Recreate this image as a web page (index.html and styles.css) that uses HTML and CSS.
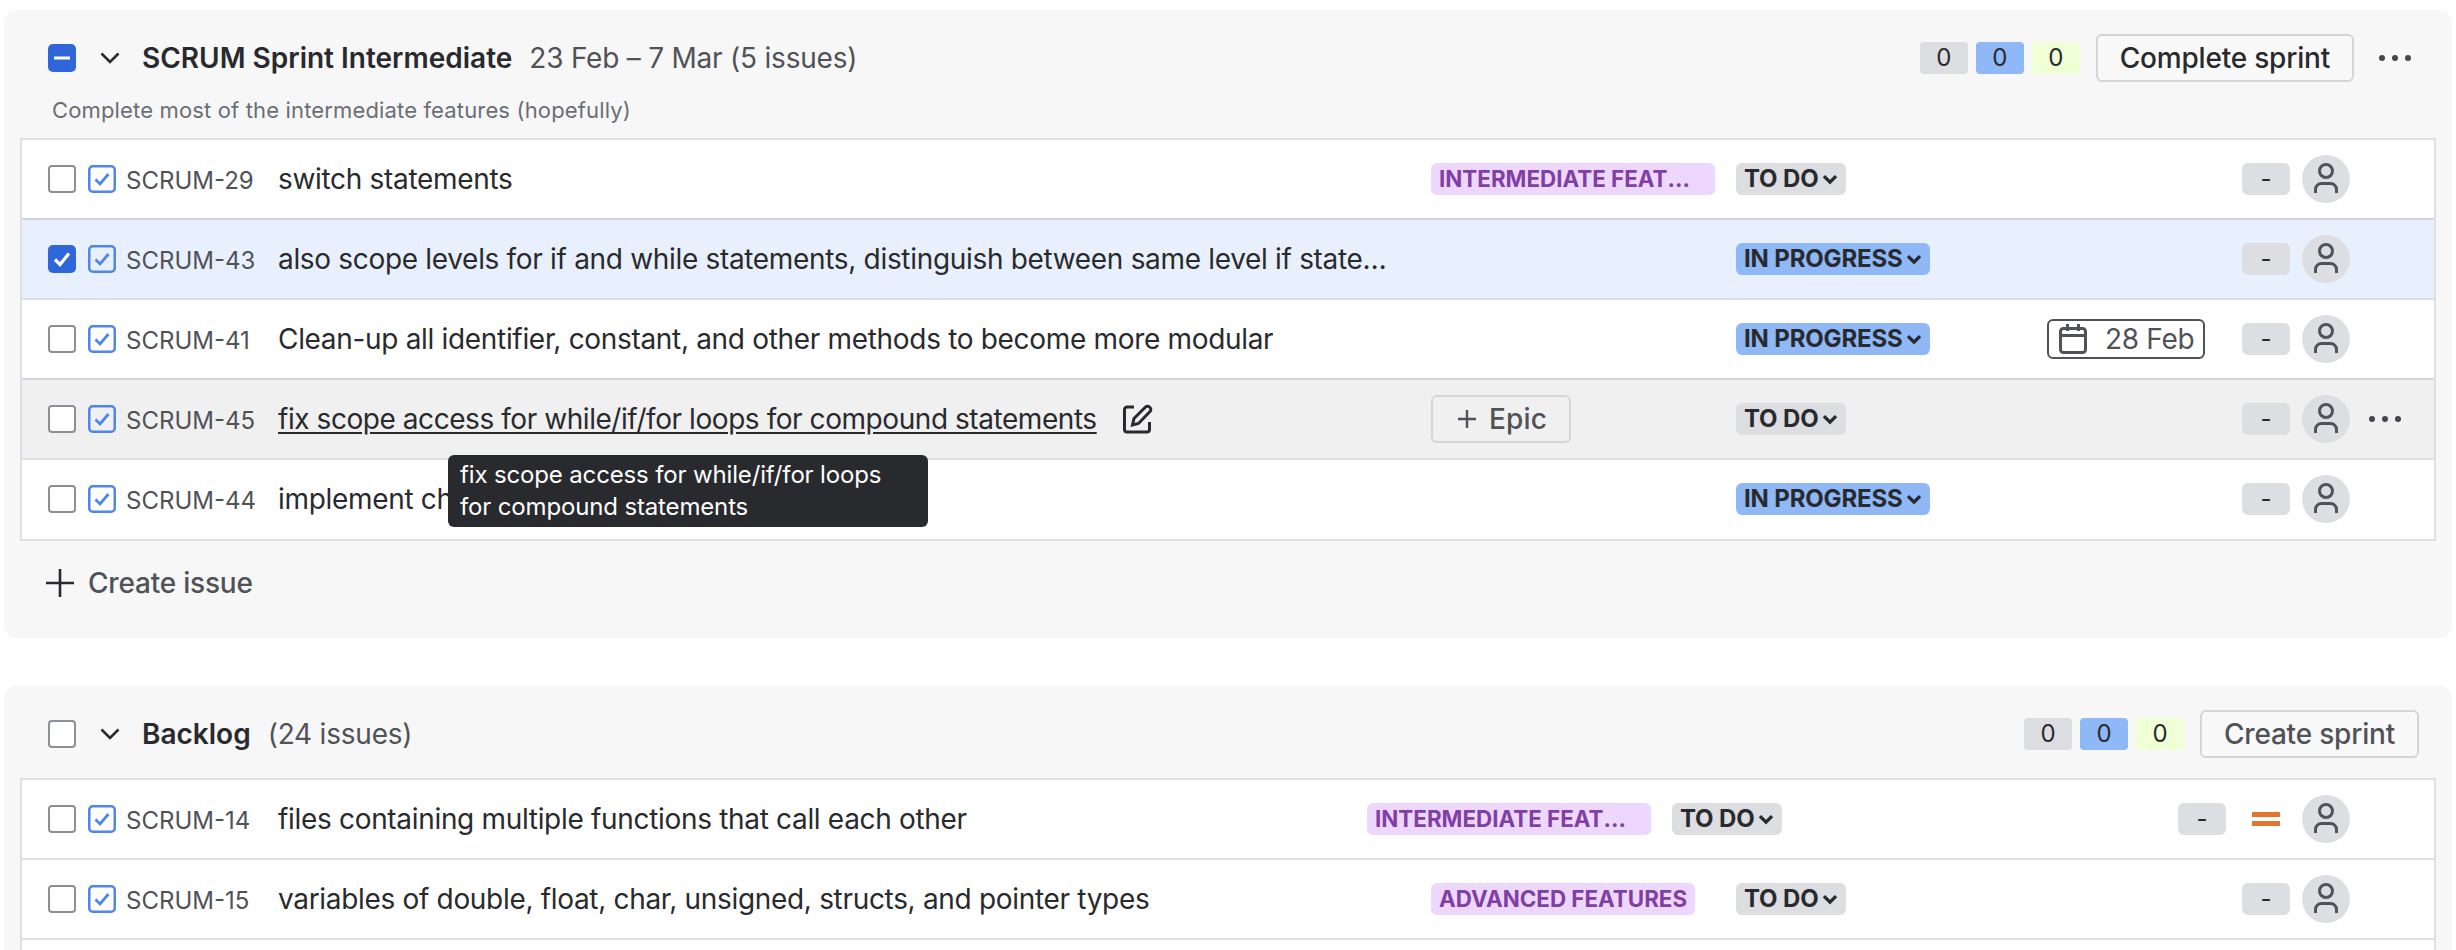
FILE: index.html
```html
<!DOCTYPE html>
<html lang="en">
<head>
  <meta charset="UTF-8">
  <meta name="viewport" content="width=device-width, initial-scale=1.0">
  <title>Backlog</title>
  <link rel="stylesheet" href="styles.css">
</head>
<body>
  <svg class="defs" width="0" height="0">
    <symbol id="type-task" viewBox="0 0 28 28">
      <rect x="1.25" y="1.25" width="25.5" height="25.5" rx="3.5" fill="none" stroke="#4f86e8" stroke-width="2.5"/>
      <path d="M7.500 14.500l4.500 4.500 8.500-10" fill="none" stroke="#4f86e8" stroke-width="2.800"/>
    </symbol>
    <symbol id="person" viewBox="0 0 48 48">
      <circle cx="24" cy="16" r="6.5" fill="none" stroke="#505258" stroke-width="3"/>
      <path d="M13.500 38v-3.500a6 6 0 0 1 6-6h9a6 6 0 0 1 6 6V38" fill="none" stroke="#505258" stroke-width="3"/>
    </symbol>
    <symbol id="dots" viewBox="0 0 34 8">
      <circle cx="4" cy="4" r="3" fill="#44464c"/>
      <circle cx="17" cy="4" r="3" fill="#44464c"/>
      <circle cx="30" cy="4" r="3" fill="#44464c"/>
    </symbol>
    <symbol id="chev" viewBox="0 0 20 12">
      <path d="M1.500 1.500L10 10l8.500-8.500" fill="none" stroke="#292a2e" stroke-width="2.600"/>
    </symbol>
    <symbol id="chev-small" viewBox="0 0 14 10">
      <path d="M1.500 2L7 7.500 12.500 2" fill="none" stroke="#292a2e" stroke-width="3"/>
    </symbol>
  </svg>

  <section class="panel">
    <div class="panel-head">
      <span class="check check-some"><svg width="28" height="28" viewBox="0 0 28 28"><path d="M6 14h16" stroke="#fff" stroke-width="3"/></svg></span>
      <svg class="chev" width="20" height="12"><use href="#chev"/></svg>
      <h2>SCRUM Sprint Intermediate</h2>
      <span class="meta">23 Feb – 7 Mar (5 issues)</span>
      <div class="head-end">
        <span class="count">0</span>
        <span class="count count-blue">0</span>
        <span class="count count-green">0</span>
        <button class="btn">Complete sprint</button>
        <svg class="head-dots" width="34" height="8"><use href="#dots"/></svg>
      </div>
    </div>
    <p class="goal">Complete most of the intermediate features (hopefully)</p>

    <div class="list list-sprint">
      <div class="row">
        <span class="check"></span>
        <svg class="type" width="28" height="28"><use href="#type-task"/></svg>
        <span class="key">SCRUM-29</span>
        <span class="summary">switch statements</span>
        <div class="row-end">
          <div class="col-epic"><span class="epic epic-cut">INTERMEDIATE FEATURES</span></div>
          <div class="col-status"><span class="status">TO DO<svg width="16" height="11"><use href="#chev-small"/></svg></span></div>
          <div class="col-date"></div>
          <span class="est">-</span>
          <span class="avatar"><svg width="48" height="48"><use href="#person"/></svg></span>
        </div>
      </div>

      <div class="row row-selected">
        <span class="check check-on"><svg width="28" height="28" viewBox="0 0 28 28"><path d="M7 14.500l5 5 9-11" fill="none" stroke="#fff" stroke-width="3.200"/></svg></span>
        <svg class="type" width="28" height="28"><use href="#type-task"/></svg>
        <span class="key">SCRUM-43</span>
        <span class="summary">also scope levels for if and while statements, distinguish between same level if statements</span>
        <div class="row-end">
          <div class="col-epic"></div>
          <div class="col-status"><span class="status status-blue">IN PROGRESS<svg width="16" height="11"><use href="#chev-small"/></svg></span></div>
          <div class="col-date"></div>
          <span class="est">-</span>
          <span class="avatar"><svg width="48" height="48"><use href="#person"/></svg></span>
        </div>
      </div>

      <div class="row">
        <span class="check"></span>
        <svg class="type" width="28" height="28"><use href="#type-task"/></svg>
        <span class="key">SCRUM-41</span>
        <span class="summary">Clean-up all identifier, constant, and other methods to become more modular</span>
        <div class="row-end">
          <div class="col-epic"></div>
          <div class="col-status"><span class="status status-blue">IN PROGRESS<svg width="16" height="11"><use href="#chev-small"/></svg></span></div>
          <div class="col-date">
            <span class="date">
              <svg width="28" height="30" viewBox="0 0 28 30"><rect x="1.500" y="4.500" width="25" height="24" rx="3" fill="none" stroke="#505258" stroke-width="3"/><path d="M1.500 11.500h25M8.500 0v7M19.500 0v7" fill="none" stroke="#505258" stroke-width="3"/></svg>
              28 Feb
            </span>
          </div>
          <span class="est">-</span>
          <span class="avatar"><svg width="48" height="48"><use href="#person"/></svg></span>
        </div>
      </div>

      <div class="row row-hover">
        <span class="check"></span>
        <svg class="type" width="28" height="28"><use href="#type-task"/></svg>
        <span class="key">SCRUM-45</span>
        <span class="summary summary-link">fix scope access for while/if/for loops for compound statements</span>
        <svg class="edit" width="30" height="30" viewBox="0 0 30 30">
          <path d="M11 3H4a2.500 2.500 0 0 0-2.500 2.500v20A2.500 2.500 0 0 0 4 28h20a2.500 2.500 0 0 0 2.500-2.500V18" fill="none" stroke="#292a2e" stroke-width="3"/>
          <path d="M9.500 21l1.500-6.500L22.500 3a2.800 2.800 0 0 1 4 0l.5.500a2.800 2.800 0 0 1 0 4L15.500 19.500z" fill="none" stroke="#292a2e" stroke-width="3"/>
        </svg>
        <div class="tooltip">fix scope access for while/if/for loops for compound statements</div>
        <div class="row-end">
          <div class="col-epic">
            <button class="btn btn-epic">
              <svg width="20" height="20" viewBox="0 0 20 20"><path d="M10 1v18M1 10h18" stroke="#505258" stroke-width="2.400"/></svg>
              Epic
            </button>
          </div>
          <div class="col-status"><span class="status">TO DO<svg width="16" height="11"><use href="#chev-small"/></svg></span></div>
          <div class="col-date"></div>
          <span class="est">-</span>
          <span class="avatar"><svg width="48" height="48"><use href="#person"/></svg></span>
          <svg class="row-dots" width="34" height="8"><use href="#dots"/></svg>
        </div>
      </div>

      <div class="row">
        <span class="check"></span>
        <svg class="type" width="28" height="28"><use href="#type-task"/></svg>
        <span class="key">SCRUM-44</span>
        <span class="summary">implement char data type</span>
        <div class="row-end">
          <div class="col-epic"></div>
          <div class="col-status"><span class="status status-blue">IN PROGRESS<svg width="16" height="11"><use href="#chev-small"/></svg></span></div>
          <div class="col-date"></div>
          <span class="est">-</span>
          <span class="avatar"><svg width="48" height="48"><use href="#person"/></svg></span>
        </div>
      </div>
    </div>

    <div class="create">
      <svg width="28" height="28" viewBox="0 0 28 28"><path d="M14 0v28M0 14h28" stroke="#292a2e" stroke-width="2.600"/></svg>
      Create issue
    </div>
  </section>

  <section class="panel panel-backlog">
    <div class="panel-head">
      <span class="check"></span>
      <svg class="chev" width="20" height="12"><use href="#chev"/></svg>
      <h2>Backlog</h2>
      <span class="meta">(24 issues)</span>
      <div class="head-end">
        <span class="count">0</span>
        <span class="count count-blue">0</span>
        <span class="count count-green">0</span>
        <button class="btn btn-muted">Create sprint</button>
      </div>
    </div>

    <div class="list">
      <div class="row">
        <span class="check"></span>
        <svg class="type" width="28" height="28"><use href="#type-task"/></svg>
        <span class="key">SCRUM-14</span>
        <span class="summary">files containing multiple functions that call each other</span>
        <div class="row-end">
          <div class="col-epic"><span class="epic epic-cut">INTERMEDIATE FEATURES</span></div>
          <div class="col-status"><span class="status">TO DO<svg width="16" height="11"><use href="#chev-small"/></svg></span></div>
          <div class="col-date"></div>
          <span class="est">-</span>
          <span class="priority"></span>
          <span class="avatar"><svg width="48" height="48"><use href="#person"/></svg></span>
        </div>
      </div>

      <div class="row">
        <span class="check"></span>
        <svg class="type" width="28" height="28"><use href="#type-task"/></svg>
        <span class="key">SCRUM-15</span>
        <span class="summary">variables of double, float, char, unsigned, structs, and pointer types</span>
        <div class="row-end">
          <div class="col-epic"><span class="epic">ADVANCED FEATURES</span></div>
          <div class="col-status"><span class="status">TO DO<svg width="16" height="11"><use href="#chev-small"/></svg></span></div>
          <div class="col-date"></div>
          <span class="est">-</span>
          <span class="avatar"><svg width="48" height="48"><use href="#person"/></svg></span>
        </div>
      </div>

      <div class="row"></div>
    </div>
  </section>
</body>
</html>
```

FILE: styles.css
```css
* { box-sizing: border-box; }
html, body { height: 100%; overflow: hidden; }
body { margin: 0; padding: 10px 4px 0; background: #fff; color: #292a2e; font-family: Inter, "Liberation Sans", sans-serif; }
.defs { position: absolute; }
svg { display: block; flex: none; }

.panel { background: #f7f7f7; border-radius: 12px; height: 628px; margin-bottom: 48px; }
.panel-backlog { height: 264px; margin-bottom: 0; border-radius: 12px 12px 0 0; overflow: hidden; }

.panel-head { display: flex; align-items: center; height: 72px; padding: 24px 33px 0 44px; }
.panel-head h2 { margin: 0 0 0 22px; font-size: 28px; font-weight: 600; line-height: 36px; }
.chev { margin-left: 24px; }
.meta { margin-left: 17px; font-size: 28px; color: #505258; line-height: 36px; letter-spacing: -0.22px; }
.head-end { display: flex; align-items: center; gap: 8px; margin-left: auto; }
.count { width: 48px; height: 32px; border-radius: 4px; background: #dddee1; font-size: 24px; line-height: 32px; text-align: center; }
.count-blue { background: #8fb8f6; }
.count-green { background: #efffd6; }
.btn { display: flex; align-items: center; height: 48px; padding: 0 22px; margin-left: 8px; background: #f9f9f9; border: 2px solid #d4d5d8; border-radius: 6px; color: #292a2e; font: 500 28px Inter, "Liberation Sans", sans-serif; letter-spacing: -0.2px; }
.btn-muted { color: #505258; }
.head-dots { margin: 0 7px 0 16px; }

.goal { margin: 0; padding: 12px 0 12px 48px; font-size: 22px; line-height: 32px; color: #6b6e76; letter-spacing: 0.15px; }
.panel-backlog .list { margin-top: 20px; }

.list { margin: 0 16px; border: 2px solid #dcdfe4; border-top: none; background: #fff; }
.list-sprint { padding-bottom: 1px; }
.row { display: flex; align-items: center; height: 80px; padding-left: 26px; border-top: 2px solid #dcdfe4; position: relative; }
.row-selected { background: #e9f0fd; border-top-color: #ccd3de; }
.row-hover { background: #f0f0f1; border-top-color: #d4d5d8; }

.check { flex: none; width: 28px; height: 28px; background: #fff; border: 2px solid #8c8f97; border-radius: 4px; }
.check-on, .check-some { background: #2f66d9; border: none; border-radius: 5px; }
.type { margin-left: 12px; }
.key { flex: none; width: 152px; margin: 3px 0 0 10px; font-size: 24px; color: #505258; line-height: 32px; }
.summary { max-width: 1112px; font-size: 28px; line-height: 36px; letter-spacing: -0.32px; white-space: nowrap; overflow: hidden; text-overflow: ellipsis; }
.summary-link { letter-spacing: -0.44px; text-decoration: underline; text-underline-offset: 3px; }
.edit { margin-left: 26px; }

.tooltip { position: absolute; left: 426px; top: 75px; z-index: 5; width: 480px; height: 72px; padding: 4px 12px; background: #292a2e; border-radius: 6px; color: #fff; font-size: 24px; line-height: 32px; letter-spacing: -0.15px; }

.row-end { display: flex; align-items: center; margin-left: auto; padding-right: 84px; position: relative; }
.col-epic { width: 305px; display: flex; }
.col-status { width: 311px; }
.col-date { width: 195px; }
.epic { height: 32px; padding: 0 8px; background: #eed7fc; border-radius: 6px; color: #803fa5; font-size: 22.4px; font-weight: 700; line-height: 32px; white-space: nowrap; }
.epic-cut { width: 284px; padding-right: 20px; overflow: hidden; text-overflow: ellipsis; }
.status { display: inline-flex; align-items: center; gap: 3px; height: 32px; padding: 0 8px; background: #dddee1; border-radius: 6px; font-size: 24px; font-weight: 700; line-height: 32px; letter-spacing: -0.15px; vertical-align: top; }
.status-blue { background: #8fb8f6; }
.date { display: inline-flex; align-items: center; gap: 18px; width: 158px; height: 40px; padding: 0 6px 0 10px; border: 2px solid #505258; border-radius: 6px; color: #505258; font-size: 28px; letter-spacing: -0.3px; white-space: nowrap; }
.est { width: 48px; height: 32px; background: #dddee1; border-radius: 6px; font-size: 24px; line-height: 32px; text-align: center; }
.avatar { width: 48px; height: 48px; margin-left: 12px; background: #dddee1; border-radius: 50%; }
.priority { width: 28px; height: 14px; margin: 0 10px 0 26px; border-top: 5px solid #e2762f; border-bottom: 5px solid #e2762f; }
.row-dots { position: absolute; right: 32px; top: 20px; }
.btn-epic { gap: 12px; width: 140px; padding: 0 24px; margin-left: 0; color: #505258; background: #f0f0f1; letter-spacing: 0.2px; }

.create { display: flex; align-items: center; gap: 14px; padding: 26px 0 0 42px; font-size: 28px; font-weight: 500; line-height: 32px; color: #505258; letter-spacing: -0.2px; }
```
